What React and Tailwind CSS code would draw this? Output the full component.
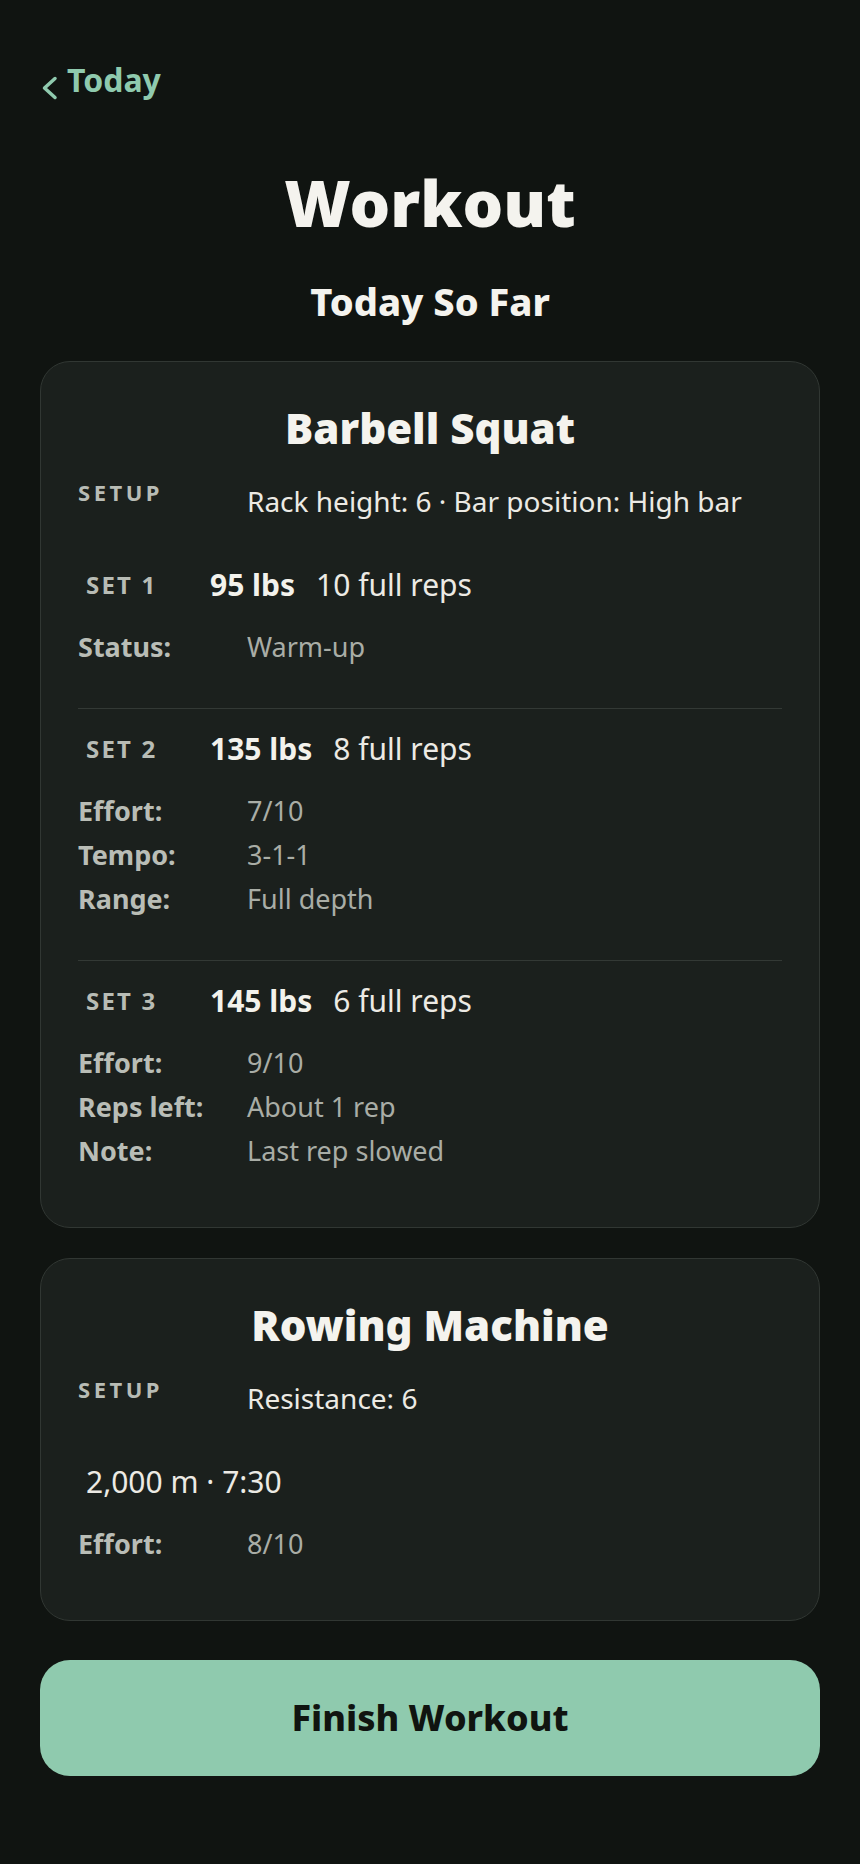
import React from 'react';

const font = { fontFamily: '"Noto Sans", "Open Sans", sans-serif' };

const exercises = [
    {
        id: 1,
        name: 'Barbell Squat',
        setup: 'Rack height: 6 · Bar position: High bar',
        sets: [
            { id: 1, label: 'SET 1', weight: '95 lbs', reps: '10 full reps', details: [['Status:', 'Warm-up']] },
            { id: 2, label: 'SET 2', weight: '135 lbs', reps: '8 full reps', details: [['Effort:', '7/10'], ['Tempo:', '3-1-1'], ['Range:', 'Full depth']] },
            { id: 3, label: 'SET 3', weight: '145 lbs', reps: '6 full reps', details: [['Effort:', '9/10'], ['Reps left:', 'About 1 rep'], ['Note:', 'Last rep slowed']] },
        ],
    },
    {
        id: 2,
        name: 'Rowing Machine',
        setup: 'Resistance: 6',
        sets: [
            { id: 1, summary: '2,000 m · 7:30', details: [['Effort:', '8/10']] },
        ],
    },
];

const Detail = ({ label, value }) => (
    <div className='flex text-[27px] leading-[44px]'>
        <span className='w-[169px] shrink-0 font-bold text-[#b9bdb6]'>{label}</span>
        <span className='text-[#a9ada6]'>{value}</span>
    </div>
);

const SetBlock = ({ set, last }) => (
    <div className={last ? 'pt-[20px] first:pt-0' : 'pt-[20px] first:pt-0 pb-[39px] border-b border-[#333935]'}>
        <div className='flex items-center h-[40px] pl-[8px] text-[30px] leading-[40px]'>
            {set.summary ? (
                <span className='text-[#eceae4]'>{set.summary}</span>
            ) : (
                <>
                    <span className='w-[124px] shrink-0 text-[24px] font-bold tracking-[0.09em] text-[#b8bcb5]'>{set.label}</span>
                    <span className='font-bold text-[#f3f2ec]'>{set.weight}</span>
                    <span className='ml-[21px] text-[#eceae4]'>{set.reps}</span>
                </>
            )}
        </div>
        <div className='mt-[20px]'>
            {set.details.map(([label, value]) => (
                <Detail key={label} label={label} value={value} />
            ))}
        </div>
    </div>
);

const App = () => {
    return (
        <div style={font} className='min-h-screen bg-[#101411] px-10 pt-[60px] pb-[88px]'>
            <a href='#' className='flex items-start text-[32px] leading-[40px] font-bold text-[#8fcaae]'>
                <svg className='mt-4 w-[18px] h-[24px] shrink-0' viewBox='0 0 18 24' fill='none' stroke='currentColor' strokeWidth='3.5' strokeLinecap='round' strokeLinejoin='round'>
                    <polyline points='15,2.5 4.5,12 15,21.5' />
                </svg>
                <span className='ml-[9px]'>Today</span>
            </a>

            <h1 className='mt-[67px] text-center text-[64px] leading-[72px] font-black text-[#f4f3ee]'>Workout</h1>
            <h2 className='mt-[40px] text-center text-[38px] leading-[44px] font-extrabold text-[#f4f3ee]'>Today So Far</h2>

            <div className='mt-[38px] flex flex-col gap-[30px]'>
                {exercises.map(exercise => (
                    <section key={exercise.id} className='bg-[#1b201d] border border-[#313733] rounded-[30px] pt-[40px] px-[37px] pb-[54px]'>
                        <h3 className='text-center text-[42px] leading-[52px] font-black text-[#f4f3ee]'>{exercise.name}</h3>
                        <div className='mt-[27px] flex items-start'>
                            <span className='w-[169px] shrink-0 text-[22px] leading-[22px] font-bold tracking-[0.16em] text-[#b8bcb5]'>SETUP</span>
                            <span className='text-[28px] leading-[40px] text-[#eceae4]'>{exercise.setup}</span>
                        </div>
                        <div className='mt-[44px]'>
                            {exercise.sets.map((set, i) => (
                                <SetBlock key={set.id} set={set} last={i === exercise.sets.length - 1} />
                            ))}
                        </div>
                    </section>
                ))}
            </div>

            <button className='mt-[39px] w-full h-[116px] rounded-[30px] bg-[#8fcaae] text-[36px] font-extrabold text-[#101410]'>
                Finish Workout
            </button>
        </div>
    );
};

export default App;
